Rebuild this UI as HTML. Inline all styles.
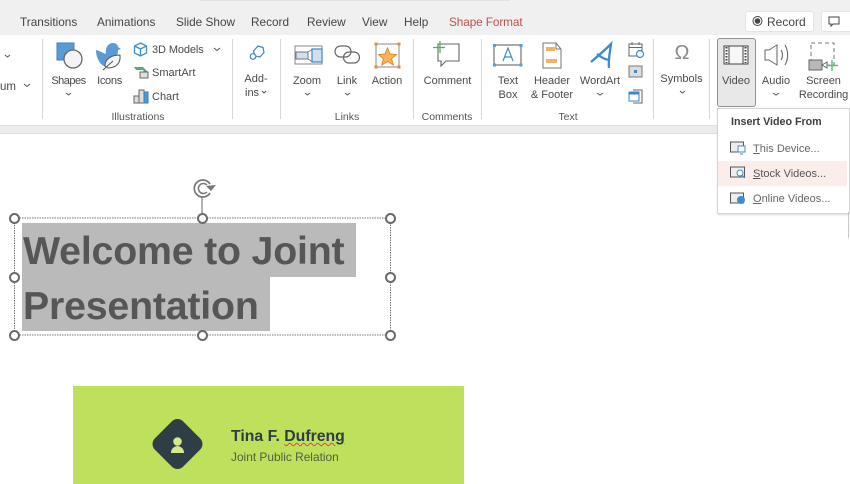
<!DOCTYPE html>
<html><head><meta charset="utf-8">
<style>
html,body{margin:0;padding:0;background:#fff}
#p{position:relative;width:850px;height:484px;overflow:hidden;background:#fff;font-family:"Liberation Sans",sans-serif;color:#444;filter:blur(.35px)}
.t{position:absolute;white-space:nowrap;font-size:11px;line-height:14px;color:#4a4a4a}
.c{transform:translateX(-50%);text-align:center}
.tab{font-size:11.8px;top:15px;color:#444}
.g{font-size:10.5px;color:#555;top:110px}
.sep{position:absolute;top:39px;height:80px;width:1px;background:#d9d9d9}
svg{position:absolute;overflow:visible}
.h{position:absolute;width:7px;height:7px;border:2px solid #6a6a6a;border-radius:50%;background:#fff;margin:-.5px 0 0 -.5px}
</style></head><body><div id="p">
<div style="position:absolute;left:0;top:0;width:850px;height:35px;background:#f0f0f0"></div>
<div style="position:absolute;left:200px;top:0;width:310px;height:1px;background:#e2e2e2"></div>
<div style="position:absolute;left:0;top:125px;width:850px;height:9px;background:#ececec;border-top:1px solid #dfdfdf;border-bottom:1px solid #dedede;box-sizing:border-box"></div>

<span class="t tab" style="left:20px">Transitions</span>
<span class="t tab" style="left:97px">Animations</span>
<span class="t tab" style="left:176px">Slide Show</span>
<span class="t tab" style="left:251px">Record</span>
<span class="t tab" style="left:307px">Review</span>
<span class="t tab" style="left:362px">View</span>
<span class="t tab" style="left:404px">Help</span>
<span class="t tab" style="left:449px;color:#c0504a;letter-spacing:-.1px">Shape Format</span>

<div style="position:absolute;left:745px;top:11px;width:67px;height:19px;background:#fff;border:1px solid #e4e4e4;border-radius:3px"></div>
<svg style="left:0;top:0" width="850" height="40"><circle cx="757.500" cy="21" r="4.500" fill="none" stroke="#444"/><circle cx="757.500" cy="21" r="2.800" fill="#444"/></svg>
<span class="t" style="left:767px;top:15px;font-size:12px;color:#444">Record</span>
<div style="position:absolute;left:821px;top:11px;width:29px;height:19px;background:#fff;border:1px solid #e4e4e4;border-radius:3px"></div>
<svg style="left:0;top:0" width="850" height="40"><path d="M829 17h10v7h-6l-2 2v-2h-2z" fill="none" stroke="#444"/></svg>

<div class="sep" style="left:42px"></div>
<div class="sep" style="left:232px"></div>
<div class="sep" style="left:280px"></div>
<div class="sep" style="left:413px"></div>
<div class="sep" style="left:481px"></div>
<div class="sep" style="left:653px"></div>
<div class="sep" style="left:709px"></div>

<span class="t" style="left:0;top:80px;font-size:11.5px">um</span>
<svg style="left:0;top:0" width="850" height="130" fill="none" stroke="#555">
<path d="M5 55l2.500 2 2.500-2M24 84l3 2.500 3-2.500M66 93l2.500 2 2.500-2M214 48l3 2.500 3-2.500M305 93l2.500 2 2.500-2M345 93l2.500 2 2.500-2M597 93l3 2 3-2M680 91l2.500 2 2.500-2M733 93l3 2 3-2M773 93l3 2 3-2M262 91l2 2 2-2"/>
</svg>

<!-- Shapes / Icons -->
<svg style="left:0;top:0" width="850" height="130">
<rect x="57" y="43" width="17" height="17" fill="#5b9bd5" stroke="#3f7fbf"/>
<circle cx="73" cy="59" r="9" fill="#f4f4f4" stroke="#666" stroke-width="1.300"/>
<path d="M96 50c4 1 7 3 10 4 -1-6 2-11 7-11 3 0 5 2 5 4l3 2-3 1c0 4-1 6-3 8l-9 9c-6-2-10-9-10-17z" fill="#5b9bd5"/>
<path d="M105 66c0-6 5-11 15-11 1 8-4 13-12 13z" fill="#f6f6f6" stroke="#555"/>
<path d="M103 70l10-9" fill="none" stroke="#555"/>
<path d="M140.500 43l6 3v7l-6 3-6-3v-7zM134.500 46l6 3 6-3M140.500 49v7" fill="none" stroke="#3f8fc9" stroke-width="1.300"/>
<path d="M134 67h9l5 5h-4l-1-2h-7z" fill="#5aa878"/><rect x="140" y="72" width="8" height="6" fill="#ddd" stroke="#666"/>
<rect x="134" y="96" width="5" height="7" fill="#ddd" stroke="#666"/><rect x="139" y="90" width="5" height="13" fill="#ddd" stroke="#666"/><rect x="144" y="92" width="4" height="11" fill="#4c9bd9" stroke="#2f7db8"/>
<path d="M258 46l5 1.500 1 5-4 4.500-5-1-1.500-5z" fill="none" stroke="#3f84c4" stroke-width="1.200"/><circle cx="253" cy="56.500" r="2.800" fill="#fff" stroke="#3f84c4" stroke-width="1.200"/>
</svg>
<span class="t c" style="left:68.500px;top:74px;letter-spacing:-.5px">Shapes</span>
<span class="t c" style="left:109.500px;top:74px;letter-spacing:-.3px">Icons</span>
<span class="t" style="left:152px;top:43px;letter-spacing:-.1px">3D Models</span>
<span class="t" style="left:152px;top:66px">SmartArt</span>
<span class="t" style="left:152px;top:90px">Chart</span>
<span class="t g c" style="left:138px">Illustrations</span>
<span class="t c" style="left:256px;top:72px">Add-</span>
<span class="t" style="left:245px;top:86px">ins</span>

<!-- Links -->
<svg style="left:0;top:0" width="850" height="130" fill="none">
<path d="M295 46h27v18h-27z" stroke="#888"/>
<rect x="296" y="52" width="12" height="7" fill="#cfe1f0" stroke="#777"/>
<path d="M308 52l5-3M308 59l5 3" stroke="#777"/>
<rect x="312" y="49" width="10" height="13" fill="#cfe1f0" stroke="#4c8fc4" stroke-width="1.300"/>
<rect x="335" y="46" width="16" height="11" rx="5.500" stroke="#666" stroke-width="1.200"/>
<rect x="343.500" y="52" width="16" height="11" rx="5.500" stroke="#666" stroke-width="1.200"/>
<rect x="376" y="44" width="23" height="23" stroke="#888"/>
<path d="M387.500 48l2.500 6 6.500.5-5 4.300 1.800 6.200-5.800-3.600-5.800 3.600 1.800-6.200-5-4.300 6.500-.5z" fill="#f5b45a" stroke="#e08a2e"/>
<g fill="#e08a3c"><rect x="374.500" y="42.500" width="3" height="3"/><rect x="397.500" y="42.500" width="3" height="3"/><rect x="374.500" y="65.500" width="3" height="3"/><rect x="397.500" y="65.500" width="3" height="3"/></g>
<path d="M438 44h21v17h-13l-5 5v-5h-3z" stroke="#666" stroke-width="1.100"/>
<path d="M440 41v12M433 47.500h12" stroke="#4fae6a" stroke-width="1.300"/>
<rect x="494" y="45" width="27" height="20" stroke="#666" stroke-width="1.100"/>
<g fill="#5b9bd5"><rect x="493" y="44" width="3" height="3"/><rect x="519.500" y="44" width="3" height="3"/><rect x="493" y="63.500" width="3" height="3"/><rect x="519.500" y="63.500" width="3" height="3"/></g>
<path d="M503 61l5-13 5 13M505 57h6" stroke="#3f8ad0" stroke-width="1.200"/>
<path d="M543 43h13l5 6v19h-18z" stroke="#777" fill="#fff"/><path d="M556 43v6h5" stroke="#777"/>
<rect x="546" y="47" width="9" height="4" fill="#f2b266"/><rect x="546" y="59" width="11" height="4" fill="#f2b266"/>
<path d="M591 62C598 56 606 49 611 44 610 52 608 60 609 68M597 54C602 58 606 60 610 60" stroke="#3a8bd1" stroke-width="2.300"/>
<path d="M629 44h13v12h-13zM629 47.500h13M632 42v3M639 42v3" stroke="#666"/><circle cx="640" cy="54" r="3.500" fill="#fff" stroke="#3a88c5" stroke-width="1.200"/>
<rect x="629" y="66" width="13" height="11" fill="#ddd" stroke="#777"/><rect x="634" y="70" width="3" height="3" fill="#3a88c5"/>
<path d="M633 90h9v13h-9" stroke="#666"/><rect x="629" y="92" width="10" height="9" fill="#fff" stroke="#3a88c5"/><rect x="629" y="92" width="10" height="2.500" fill="#3a88c5"/>
</svg>
<span class="t c" style="left:682px;top:41px;font-size:20px;line-height:24px;color:#8a8a8a">Ω</span>
<span class="t c" style="left:307px;top:74px">Zoom</span>
<span class="t c" style="left:347px;top:74px">Link</span>
<span class="t c" style="left:387px;top:74px">Action</span>
<span class="t g c" style="left:347px">Links</span>
<span class="t c" style="left:447.500px;top:74px">Comment</span>
<span class="t g c" style="left:447px">Comments</span>
<span class="t c" style="left:508px;top:74px">Text</span>
<span class="t c" style="left:508px;top:88px">Box</span>
<span class="t c" style="left:552px;top:74px">Header</span>
<span class="t c" style="left:552px;top:88px">&amp; Footer</span>
<span class="t c" style="left:600px;top:74px">WordArt</span>
<span class="t g c" style="left:568px">Text</span>
<span class="t c" style="left:681.500px;top:72px">Symbols</span>

<!-- Video group -->
<div style="position:absolute;left:717px;top:38px;width:37px;height:67px;background:#e8e8e8;border:1px solid #8f8f8f;border-radius:3px"></div>
<svg style="left:0;top:0" width="850" height="130" fill="none">
<rect x="724" y="46" width="24" height="18" fill="#f7f7f7" stroke="#444"/>
<path d="M729 46v18M743 46v18" stroke="#444"/>
<path d="M726.500 47v16M745.500 47v16" stroke="#444" stroke-width="2" stroke-dasharray="1.500 1.500"/>
<path d="M765 50h4l8-5v20l-8-5h-4z" stroke="#666" fill="#fff"/>
<path d="M781 50c2 3 2 7 0 10M785 45c3.500 6 3.500 14 0 20" stroke="#666" stroke-width="1.100"/>
<rect x="811" y="43" width="23" height="22" stroke="#777" stroke-dasharray="4 3"/>
<rect x="809" y="60" width="13" height="10" fill="#b8b8b8" stroke="#666"/>
<path d="M822 65l5-3v6z" fill="#fff" stroke="#666"/>
<path d="M832 60v11M827 65.500h11" stroke="#5fb878" stroke-width="1.400"/>
</svg>
<span class="t c" style="left:736px;top:74px">Video</span>
<span class="t c" style="left:776px;top:74px">Audio</span>
<span class="t c" style="left:823.500px;top:74px">Screen</span>
<span class="t c" style="left:823.500px;top:88px;letter-spacing:-.1px">Recording</span>

<!-- Dropdown -->
<div style="position:absolute;left:717px;top:108px;width:131px;height:104px;background:#fff;border:1px solid #d4d4d4;box-shadow:1px 1px 2px rgba(0,0,0,.15)"></div>
<div style="position:absolute;left:848px;top:212px;width:1px;height:26px;background:#c8c8c8"></div>
<div style="position:absolute;left:718px;top:161px;width:129px;height:25px;background:#fbeeea"></div>
<span class="t" style="left:731px;top:115px;font-size:10.700px;font-weight:bold;color:#3c3c3c">Insert Video From</span>
<span class="t" style="left:753px;top:142px;font-size:11px;color:#666"><u>T</u>his Device...</span>
<span class="t" style="left:753px;top:167px;font-size:11px;color:#555"><u>S</u>tock Videos...</span>
<span class="t" style="left:753px;top:192px;font-size:11px;color:#666"><u>O</u>nline Videos...</span>
<svg style="left:0;top:0" width="850" height="220" fill="none">
<rect x="730.500" y="142" width="13" height="10" fill="#eee" stroke="#555"/><rect x="738" y="146" width="7" height="6" fill="#fff" stroke="#3f8ad0"/><path d="M740 154h3" stroke="#3f8ad0"/>
<rect x="730.500" y="167" width="14" height="10" fill="#eee" stroke="#555"/><circle cx="740" cy="173" r="3" fill="#fff" stroke="#3f8ad0"/><path d="M742 175l3 3" stroke="#3f8ad0"/>
<rect x="730.500" y="193" width="13" height="10" fill="#eee" stroke="#555"/><circle cx="741" cy="200" r="4" fill="#3f8ad0"/>
</svg>

<!-- Slide title -->
<div style="position:absolute;left:22px;top:223px;width:334px;height:54px;background:#bababa"></div>
<div style="position:absolute;left:22px;top:277px;width:248px;height:54px;background:#bababa"></div>
<span class="t" style="left:23px;top:227px;font-size:39.300px;line-height:48px;font-weight:bold;color:#565656;letter-spacing:-.2px">Welcome to Joint</span>
<span class="t" style="left:23px;top:282px;font-size:39.300px;line-height:48px;font-weight:bold;color:#565656;letter-spacing:-.2px">Presentation</span>

<svg style="left:0;top:0" width="850" height="340" fill="none">
<rect x="14.500" y="218" width="376" height="117" stroke="#777" stroke-dasharray="1.500 1"/>
<path d="M202 197v17" stroke="#999" stroke-width="1.500"/>
<path d="M210 184a8.500 8.500 0 1 0 0 9" stroke="#777" stroke-width="1.700"/>
<path d="M207 192a5 5 0 1 1 0-7" stroke="#777" stroke-width="1.500"/>
<path d="M206 186l10-1-5 6z" fill="#777"/>
</svg>
<div class="h" style="left:9px;top:213px"></div>
<div class="h" style="left:197px;top:213px"></div>
<div class="h" style="left:385px;top:213px"></div>
<div class="h" style="left:9px;top:272px"></div>
<div class="h" style="left:385px;top:272px"></div>
<div class="h" style="left:9px;top:330px"></div>
<div class="h" style="left:197px;top:330px"></div>
<div class="h" style="left:385px;top:330px"></div>

<!-- Green card -->
<div style="position:absolute;left:73px;top:386px;width:391px;height:98px;background:#bfe05c"></div>
<svg style="left:0;top:0" width="850" height="484">
<rect x="157.500" y="424" width="40" height="40" rx="8" transform="rotate(45 177.500 444)" fill="#2f3d45"/>
<circle cx="177.500" cy="441.500" r="4.300" fill="#d6e98a"/>
<path d="M171 453c0-1 0-6 6.500-7 6.500 1 6.500 6 6.500 7z" fill="#d6e98a"/>
</svg>
<span class="t" style="left:231px;top:428px;font-size:15.800px;line-height:18px;font-weight:bold;color:#2f3d45">Tina F. <span style="text-decoration:underline wavy #d0503c 1px;text-underline-offset:1px">Dufreng</span></span>
<span class="t" style="left:231px;top:450px;font-size:11.900px;color:#4f5f40">Joint Public Relation</span>
</div></body></html>
